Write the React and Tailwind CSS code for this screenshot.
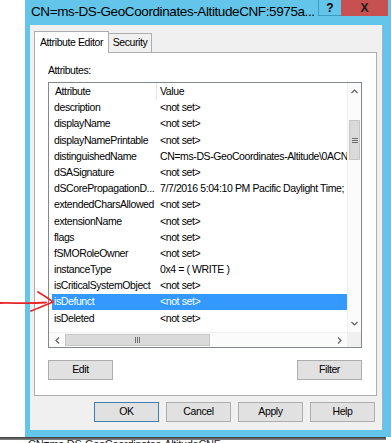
import React from "react";

const rows = [
  ["description", "<not set>"],
  ["displayName", "<not set>"],
  ["displayNamePrintable", "<not set>"],
  ["distinguishedName", "CN=ms-DS-GeoCoordinates-Altitude\\0ACNF:5975a4d2-1a4b"],
  ["dSASignature", "<not set>"],
  ["dSCorePropagationD...", "7/7/2016 5:04:10 PM Pacific Daylight Time;"],
  ["extendedCharsAllowed", "<not set>"],
  ["extensionName", "<not set>"],
  ["flags", "<not set>"],
  ["fSMORoleOwner", "<not set>"],
  ["instanceType", "0x4 = ( WRITE )"],
  ["isCriticalSystemObject", "<not set>"],
  ["isDefunct", "<not set>"],
  ["isDeleted", "<not set>"],
];

function Btn({ children, def, w = "w-[65px]" }) {
  return (
    <div
      className={`${w} h-[20px] flex items-center justify-center bg-[#e1e1e1] border ${
        def ? "border-[#3c7fb1]" : "border-[#adadad]"
      } text-[10.5px] tracking-[-0.4px] text-black`}
    >
      {children}
    </div>
  );
}

export default function App() {
  const font = { fontFamily: '"Liberation Sans", Arial, sans-serif' };
  return (
    <div
      className="relative w-[391px] h-[443px] bg-white overflow-hidden"
      style={font}
    >
      {/* window */}
      <div className="ml-[25px] w-[366px] h-[437px] bg-[#62c5e9] flex flex-col">
        {/* title bar */}
        <div className="h-[25px] flex items-start shrink-0">
          <div className="pl-[6px] pt-[3px] text-[13.5px] tracking-[-0.4px] text-black whitespace-nowrap leading-[18px] flex-1 overflow-hidden">
            CN=ms-DS-GeoCoordinates-AltitudeCNF:5975a...
          </div>
          <div className="w-[23px] h-[16px] bg-[#62c5e9] border-l border-b border-[#3a9cc2] flex items-center justify-center text-[12px] font-bold text-black leading-none">
            ?
          </div>
          <div className="w-[47px] h-[16px] bg-[#c75050] flex items-center justify-center text-[12px] font-bold text-[#1a1a1a] leading-none">
            X
          </div>
          <div className="w-[3px]" />
        </div>
        {/* client area */}
        <div className="ml-[5px] mr-[8px] h-[405px] bg-[#f0f0f0] border-r border-[#9fb7c2] flex flex-col">
          <div className="pt-[6px] pl-[4px]">
            {/* tabs */}
            <div className="flex items-end h-[21px]">
              <div className="relative z-10 w-[75px] h-[22px] -mb-px bg-white border border-b-0 border-[#adadad] flex items-center justify-center text-[10.5px] tracking-[-0.4px] text-black">
                Attribute Editor
              </div>
              <div className="w-[43px] h-[19px] bg-[#f0f0f0] border border-l-0 border-b-0 border-[#adadad] flex items-center justify-center text-[10.5px] tracking-[-0.4px] text-black">
                Security
              </div>
            </div>
            {/* panel */}
            <div className="w-[343px] h-[344px] bg-white border border-[#adadad] px-[13px] pt-[10px] flex flex-col">
              <div className="h-[14px] leading-[14px] text-[10.5px] tracking-[-0.4px] text-black">
                Attributes:
              </div>
              {/* list box */}
              <div className="mt-[5px] w-[314px] h-[266px] border border-[#828790] flex flex-col">
                <div className="flex h-[249px]">
                  <div className="w-[298px] h-[249px] overflow-hidden flex flex-col">
                    {/* header */}
                    <div className="h-[17px] shrink-0 flex text-[10.5px] tracking-[-0.4px] text-black">
                      <div className="w-[108px] pl-[6px] flex items-center border-r border-[#e5e5e5]">
                        Attribute
                      </div>
                      <div className="pl-[3px] flex items-center">Value</div>
                    </div>
                    {rows.map(([a, v]) => {
                      const sel = a === "isDefunct";
                      return (
                        <div
                          key={a}
                          className={`ml-[3px] h-[16.2px] shrink-0 flex items-center whitespace-nowrap text-[10.5px] tracking-[-0.4px] ${
                            sel ? "bg-[#3399ff] text-white" : "text-black"
                          }`}
                        >
                          <div className="w-[105px] pl-[2px] overflow-hidden">{a}</div>
                          <div className="pl-[3px] overflow-hidden flex-1">{v}</div>
                        </div>
                      );
                    })}
                  </div>
                  {/* vertical scrollbar */}
                  <div className="w-[14px] h-[249px] bg-[#fbfbfb] border-l border-[#f0f0f0] flex flex-col">
                    <div className="h-[17px] flex items-center justify-center">
                      <svg width="7" height="5" viewBox="0 0 7 5">
                        <path d="M0.5 4 L3.5 1 L6.5 4" fill="none" stroke="#606060" strokeWidth="1.2" />
                      </svg>
                    </div>
                    <div className="h-[20px]" />
                    <div className="h-[40px] mx-[1px] bg-[#dadada] border border-[#c6c6c6] flex flex-col items-center justify-center gap-[1px]">
                      <div className="w-[6px] h-px bg-[#707070]" />
                      <div className="w-[6px] h-px bg-[#707070]" />
                      <div className="w-[6px] h-px bg-[#707070]" />
                    </div>
                    <div className="flex-1" />
                    <div className="h-[17px] flex items-center justify-center">
                      <svg width="7" height="5" viewBox="0 0 7 5">
                        <path d="M0.5 1 L3.5 4 L6.5 1" fill="none" stroke="#606060" strokeWidth="1.2" />
                      </svg>
                    </div>
                  </div>
                </div>
                {/* horizontal scrollbar */}
                <div className="flex h-[15px]">
                  <div className="w-[298px] h-[15px] bg-[#fbfbfb] border-t border-[#f0f0f0] flex">
                    <div className="w-[16px] flex items-center justify-center">
                      <svg width="5" height="7" viewBox="0 0 5 7">
                        <path d="M4 0.5 L1 3.5 L4 6.5" fill="none" stroke="#606060" strokeWidth="1.2" />
                      </svg>
                    </div>
                    <div className="w-[145px] my-[1px] bg-[#dadada] border border-[#c6c6c6] flex items-center justify-center gap-[1px]">
                      <div className="w-px h-[6px] bg-[#707070]" />
                      <div className="w-px h-[6px] bg-[#707070]" />
                      <div className="w-px h-[6px] bg-[#707070]" />
                    </div>
                    <div className="flex-1" />
                    <div className="w-[16px] flex items-center justify-center">
                      <svg width="5" height="7" viewBox="0 0 5 7">
                        <path d="M1 0.5 L4 3.5 L1 6.5" fill="none" stroke="#606060" strokeWidth="1.2" />
                      </svg>
                    </div>
                  </div>
                  <div className="w-[14px] h-[15px] bg-[#f0f0f0]" />
                </div>
              </div>
              {/* edit/filter */}
              <div className="mt-[12px] w-[314px] flex justify-between">
                <Btn>Edit</Btn>
                <Btn>Filter</Btn>
              </div>
            </div>
          </div>
          {/* dialog buttons */}
          <div className="mt-[6px] flex justify-end gap-[7px] pr-[7px]">
            <Btn def>OK</Btn>
            <Btn>Cancel</Btn>
            <Btn>Apply</Btn>
            <Btn>Help</Btn>
          </div>
        </div>
      </div>
      {/* bottom shadow line */}
      <div className="w-[386px] h-[3px] bg-gradient-to-b from-[#3a3a3a] to-[#8a8a8a]" />
      <div className="h-[3px] overflow-hidden pl-[28px]">
        <div className="text-[11px] leading-[11px] tracking-[-0.3px] text-[#222] -mt-[1px] whitespace-nowrap">
          CN=ms-DS-GeoCoordinates-AltitudeCNF
        </div>
      </div>
      {/* red arrow annotation */}
      <svg
        className="absolute left-0 top-[286px]"
        width="60"
        height="32"
        viewBox="0 0 60 32"
      >
        <path
          d="M0 17 C12 16.5 26 18 46 16.5"
          fill="none"
          stroke="#e8262a"
          strokeWidth="1.8"
          strokeLinecap="round"
        />
        <path
          d="M38 6 C43 9 48 12 53 16 C46 19 38 22 31 25"
          fill="none"
          stroke="#e8262a"
          strokeWidth="1.8"
          strokeLinecap="round"
          strokeLinejoin="round"
        />
      </svg>
    </div>
  );
}
